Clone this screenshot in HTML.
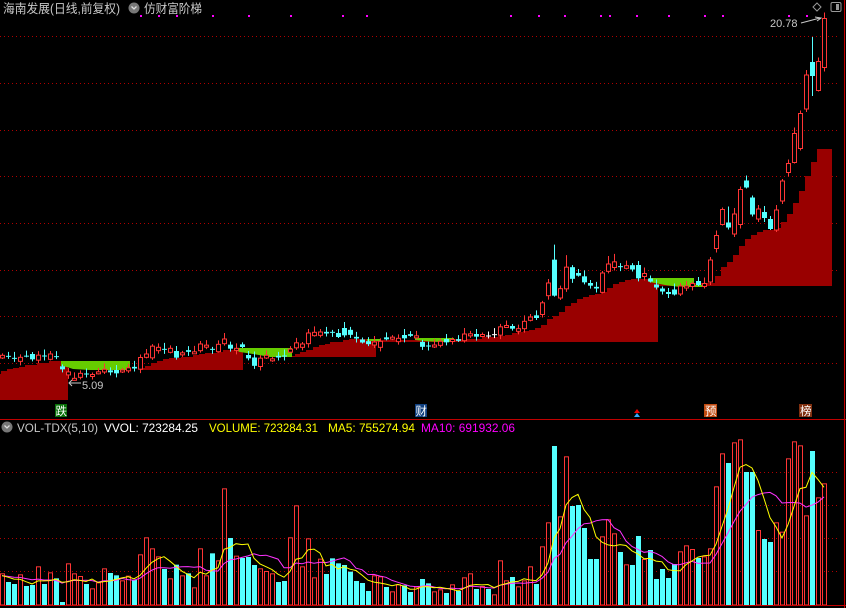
<!DOCTYPE html>
<html><head><meta charset="utf-8"><style>
html,body{margin:0;padding:0;background:#000;width:846px;height:608px;overflow:hidden}
svg{display:block}
text{font-family:"Liberation Sans","Noto Sans CJK SC",sans-serif}
</style></head><body>
<svg id="s" width="846" height="608" xmlns="http://www.w3.org/2000/svg">
<rect width="846" height="608" fill="#000"/>
<g id="grid" stroke="#b00000" stroke-width="1" stroke-dasharray="1,3"></g>
<g id="stair"></g>
<g id="cand"></g>
<g id="vol"></g>
<line x1="0" y1="419.5" x2="846" y2="419.5" stroke="#c00000"/>
<line x1="0" y1="605.5" x2="846" y2="605.5" stroke="#c00000"/>
<line x1="844.5" y1="0" x2="844.5" y2="608" stroke="#c00000"/>
<text x="3" y="13" font-size="12.5" fill="#c8c8c8" textLength="117" lengthAdjust="spacingAndGlyphs">海南发展(日线,前复权)</text>
<circle cx="134" cy="8" r="5.5" fill="#777"/><path d="M131.5 6.5 L134 9 L136.5 6.5" stroke="#ddd" stroke-width="1.3" fill="none"/>
<text x="144" y="13" font-size="12.5" fill="#c8c8c8" textLength="58" lengthAdjust="spacingAndGlyphs">仿财富阶梯</text>
<path d="M817 3 L821 7 L817 11 L813 7 Z" stroke="#999" fill="none"/>
<rect x="831" y="2.5" width="10" height="9" rx="1.5" stroke="#999" fill="none"/><rect x="836" y="4" width="3" height="6" fill="#999"/>
<text x="770" y="27" font-size="11" fill="#c8c8c8">20.78</text>
<path d="M801 23 L820 18 M815 17 L821 18 L817 21" stroke="#c8c8c8" fill="none"/>
<text x="82" y="389" font-size="11" fill="#c8c8c8">5.09</text>
<path d="M69 383 L81 383 M72 380 L69 383 L72 386" stroke="#c8c8c8" fill="none"/>
<rect x="55" y="404" width="12" height="13" fill="#087008"/><text x="55.5" y="415" font-size="11.5" fill="#fff">跌</text>
<rect x="415" y="404" width="12" height="13" fill="#104080"/><text x="415.5" y="415" font-size="11.5" fill="#fff">财</text>
<path d="M634 413 L637 409 L640 413 Z" fill="#e00"/><path d="M634 417 L637 413 L640 417 Z" fill="#3af"/>
<rect x="704" y="404" width="13" height="13" fill="#c04a10"/><text x="705" y="415" font-size="11.5" fill="#fff">预</text>
<rect x="799" y="404" width="13" height="13" fill="#803010"/><text x="800" y="415" font-size="11.5" fill="#fff">榜</text>
<circle cx="7" cy="427" r="5.5" fill="#777"/><path d="M4.5 425.5 L7 428 L9.5 425.5" stroke="#ddd" stroke-width="1.3" fill="none"/>
<g font-size="12">
<text x="17" y="432" fill="#c8c8c8" textLength="81" lengthAdjust="spacingAndGlyphs">VOL-TDX(5,10)</text>
<text x="104" y="432" fill="#fff" textLength="94" lengthAdjust="spacingAndGlyphs">VVOL: 723284.25</text>
<text x="209" y="432" fill="#ff0" textLength="109" lengthAdjust="spacingAndGlyphs">VOLUME: 723284.31</text>
<text x="328" y="432" fill="#ff0" textLength="87" lengthAdjust="spacingAndGlyphs">MA5: 755274.94</text>
<text x="421" y="432" fill="#f0f" textLength="94" lengthAdjust="spacingAndGlyphs">MA10: 691932.06</text>
</g>
<g id="dots" fill="#f0f"></g>
</svg>
<script>
(function(){
var NS="http://www.w3.org/2000/svg";
function el(p,t,a){var e=document.createElementNS(NS,t);for(var k in a)e.setAttribute(k,a[k]);document.getElementById(p).appendChild(e);return e;}
[36,83,130,176,223,270,316,363,472,505,538,571].forEach(function(y){el("grid","line",{x1:0,x2:840,y1:y+.5,y2:y+.5});});
[140,158,176,212,248,290,342,366,510,538,564,600,609,636,668,704,722,788,806].forEach(function(x){el("dots","rect",{x:x,y:15,width:2,height:2});});
function stair(pts,bot,fill){var d="M"+pts[0][0]+" "+bot;for(var i=0;i<pts.length;i++){var x=pts[i][0],y=pts[i][1],nx=i+1<pts.length?pts[i+1][0]:pts[i][2];d+=" L"+x+" "+y+" L"+nx+" "+y;}d+=" L"+(pts[pts.length-1][2])+" "+bot+" Z";el("stair","path",{d:d,fill:fill});}
var R="#990000";
stair([[0,374],[1,371],[7,369],[13,368],[19,367],[25,365],[37,363],[49,361,68]],400,R);
stair([[135,370],[140,368],[145,366],[151,363],[157,361],[163,359],[169,358],[181,357],[193,355],[199,354],[205,353],[217,352],[223,350,243]],370,R);
stair([[243,357],[292,356],[295,354],[300,352],[306,350],[313,347],[319,345],[325,344],[330,342],[343,340],[349,339,376]],357,R);
stair([[376,340],[415,339],[482,337],[498,336],[505,335],[512,333],[517,332],[523,331],[529,330],[535,328],[541,325],[547,319],[553,316],[559,312],[565,306],[571,303],[577,299],[583,297],[589,295],[595,294],[601,292],[607,288],[613,284],[619,282],[625,280],[631,279,658]],342,R);
stair([[658,283],[706,283],[715,276],[721,267],[727,262],[733,255],[739,246],[745,239],[751,235],[757,232],[763,230],[775,228],[781,222],[787,214],[793,203],[799,191],[805,176],[811,162],[817,149,832]],286,R);
var G="#66cc00";
el("stair","path",{d:"M61 361 L130 361 L130 370 L90 370 L73 369 L67 367 L61 366 Z",fill:G});
el("stair","path",{d:"M235 348 L292 348 L292 357 L270 357 L253 354 L240 352 L235 350 Z",fill:G});
el("stair","path",{d:"M367 339 L380 339 L380 341 L367 341 Z",fill:G});
el("stair","path",{d:"M415 338 L454 338 L454 342 L440 342 L425 341 L415 340 Z",fill:G});
el("stair","path",{d:"M649 278 L694 278 L694 285 L705 285 L705 287 L680 287 L665 285 L655 283 L649 282 Z",fill:G});
var VT=[[0,'R',430],[1,'C',456],[2,'C',462],[3,'R',433],[4,'C',468],[5,'C',465],[6,'R',409],[7,'C',462],[8,'R',427],[9,'C',445],[10,'C',516],[11,'R',400],[12,'R',430],[13,'R',438],[14,'C',462],[15,'R',475],[16,'R',457],[17,'R',415],[18,'C',429],[19,'C',436],[20,'R',451],[21,'R',437],[22,'C',450],[23,'R',373],[24,'R',322],[25,'R',355],[26,'R',379],[27,'C',417],[28,'R',445],[29,'C',404],[30,'R',436],[31,'C',430],[32,'R',472],[33,'R',355],[34,'R',436],[35,'C',370],[36,'R',391],[37,'R',175],[38,'C',324],[39,'R',377],[40,'C',384],[41,'C',381],[42,'C',405],[43,'R',415],[44,'R',423],[45,'R',430],[46,'C',456],[47,'C',453],[48,'R',322],[49,'R',226],[50,'R',409],[51,'R',325],[52,'R',442],[53,'R',386],[54,'C',432],[55,'C',385],[56,'C',400],[57,'C',405],[58,'C',425],[59,'C',453],[60,'C',459],[61,'C',483],[62,'R',436],[63,'R',439],[64,'C',471],[65,'R',484],[66,'R',463],[67,'C',466],[68,'C',486],[69,'R',470],
[70,'C',447],[71,'C',460],[72,'R',484],[73,'R',478],[74,'C',489],[75,'R',463],[76,'C',483],[77,'R',442],[78,'R',430],[79,'C',477],[80,'R',468],[81,'C',477],[82,'R',493],[83,'R',391],[84,'R',451],[85,'C',441],[86,'R',469],[87,'R',451],[88,'R',409],[89,'C',462],[90,'R',349],[91,'R',277],[92,'C',48],[93,'R',259],[94,'R',79],[95,'C',228],[96,'C',225],[97,'C',294],[98,'C',387],[99,'C',387],[100,'R',319],[101,'R',268],[102,'R',310],[103,'C',366],[104,'R',403],[105,'C',405],[106,'C',318],[107,'R',387],[108,'C',360],[109,'C',447],[110,'C',417],[111,'C',444],[112,'C',402],[113,'R',364],[114,'R',346],[115,'R',357],[116,'C',384],[117,'R',379],[118,'R',355],[119,'R',169],[120,'R',70],[121,'C',99],[122,'R',37],[123,'R',28],[124,'C',126],[125,'C',126],[126,'R',300],[127,'C',327],[128,'C',336],[129,'R',277],[130,'R',305],[131,'R',85],[132,'R',34],[133,'R',46],[134,'R',256],[135,'C',63],[136,'R',202],[137,'R',160]];
var RED="#ff3535",CY="#55ffff";
var col=[],vv=[];
VT.forEach(function(a){var i=a[0],vt=430+a[2]/3;col[i]=a[1];vv[i]=605-vt;
 if(a[1]=='R')el("vol","rect",{x:6*i+.5,y:vt+.5,width:4,height:605-vt-0.5,fill:"none",stroke:RED});
 else el("vol","rect",{x:6*i,y:vt,width:5,height:605-vt,fill:CY});});
function ma(n,c){var d="";for(var i=0;i<vv.length;i++){var s=0;for(var k=0;k<n;k++){s+=vv[Math.max(0,i-k)];}var y=605-s/n*0.93;d+=(i?" L":"M")+(6*i+2)+" "+y.toFixed(1);}el("vol","path",{d:d,stroke:c,fill:"none","stroke-width":1});}
ma(10,"#ff33ff");ma(5,"#ffff00");
var CD={};
function A(base,sc,list){list.forEach(function(a){CD[a[0]]=[base+a[1]/sc,a[2]/sc];});}
A(300,3,[[0,170,8],[1,169,3],[2,175,3],[3,178,12],[4,168,2],[5,170,16],[6,173,15],[7,168,3],[8,170,16],[9,170,3],[12,237,4],[13,226,12],[14,222,3],[15,225,3],[16,218,5],[17,212,8],[18,214,6],[19,215,10],[20,213,6],[22,203,5],[23,190,35],[24,167,10],[25,156,35],[26,147,10],[27,148,3],[28,151,12],[29,163,20],[30,160,3],[31,153,5],[32,157,3],[33,142,20],[34,137,3],[35,148,3],[36,144,22],[37,124,14],[38,140,12],[39,148,6],[40,137,8],[41,170,10],[42,185,25],[43,187,25],[44,170,8],[45,178,3],[46,170,5],[47,168,3],[49,136,15],[50,137,10],[51,115,32],[52,102,10],[53,101,10],[54,98,5]]);
A(240,3,[[55,277,3],[56,285,12],[57,275,22],[58,277,15],[59,293,5],[63,313,18],[64,295,6],[65,293,3],[66,300,10],[67,290,10],[68,285,5],[69,290,5],[70,313,15],[71,318,3],[72,318,6],[73,310,12],[74,302,10],[75,300,3],[76,300,5],[77,292,20],[78,283,3],[79,286,8],[80,286,5],[81,288,3],[82,284,3],[83,273,25],[84,258,3],[85,262,8],[86,270,8],[87,255,22],[88,236,10],[89,230,8],[90,206,35],[91,148,38],[92,113,108],[93,160,28],[94,114,65],[95,99,35],[96,103,8],[97,118,18],[98,133,8],[99,143,5],[100,128,58],[101,83,22],[102,74,17],[103,80,3],[104,81,8],[105,82,13],[106,95,40]]);
A(0,1,[[107,275,3],[108,280,3],[109,286,3],[110,290,3],[111,293,2],[112,292,5],[113,290,8],[114,287,2],[115,285,3],[116,283,4],[117,285,3],[118,271,22],[119,242,13],[120,217,15],[121,225,5],[122,224,20],[123,207,35],[124,184,7],[125,206,17],[126,214,10],[127,215,6],[128,224,10],[129,220,20],[130,191,20],[131,168,9],[132,148,29],[133,131,35],[134,92,34],[135,69,14],[136,76,29],[137,43,49]]);
var last=null;
for(var i=0;i<138;i++){var c=CD[i];if(!c){var j=i+1;while(!CD[j]&&j<140)j++;var nm=CD[j]?CD[j][0]:last[0];c=[(last?last[0]:nm)*0.5+nm*0.5,3];}
 last=c;var ty=c[0]-c[1]/2,by=c[0]+c[1]/2,h=Math.max(c[1],1);
 var wk=2+((i*37)%5),wl=1+((i*53)%4);
 if(i==92)wk=15;if(i==124)wk=5;if(i==135){wk=25;wl=20;}if(i==137){wl=4;}if(i==94)wk=12;if(i==101||i==102)wk=8;if(i==106)wk=4;if(i==121)wk=16;
 var cc=col[i]=='R'?RED:CY;if(i==81||i==82)cc="#fff";
 var x=6*i+2.5;
 el("cand","line",{x1:x,x2:x,y1:ty-wk,y2:by+wl,stroke:cc});
 if(col[i]=='R'&&i!=81&&i!=82)el("cand","rect",{x:6*i+.5,y:ty,width:4,height:Math.max(h,2),fill:"#000",stroke:cc});
 else el("cand","rect",{x:6*i,y:ty,width:5,height:h,fill:cc});
}
})();
</script>
</body></html>
